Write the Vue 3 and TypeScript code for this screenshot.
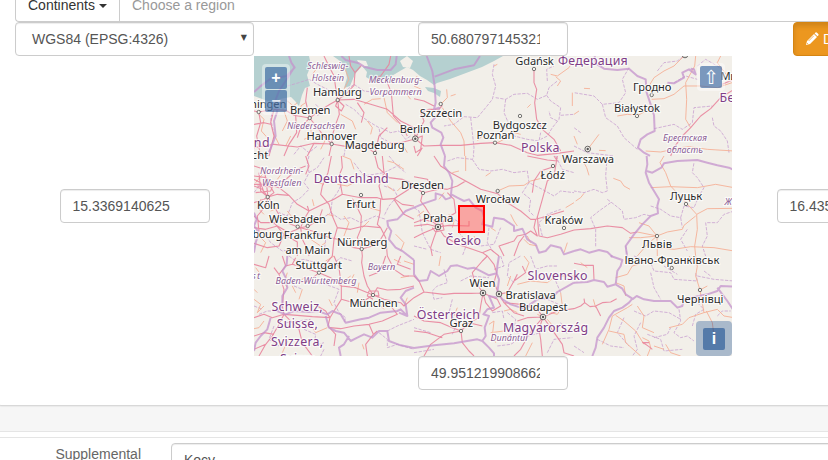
<script setup lang="ts">
import { ref } from 'vue'

type Kind = 'city' | 'country' | 'region'
interface Label { t: string; x: number; w: number; y: number; k: Kind }
interface Tile { x: number; y: number; road: string; trunk: string; admin: string; border: string }

const north = ref('50.680797145321')
const south = ref('49.951219908662')
const west = ref('15.3369140625')
const east = ref('16.435546875')
const title = ref('Kocy')

const L = (k: Kind, t: string, x: number, w: number, y: number): Label => ({ k, t, x, w, y })
const labels: Label[] = [
  L('region', 'Schleswig-', 307.3, 41, 69), L('region', 'Holstein', 311.7, 32.5, 81),
  L('region', 'Mecklenburg-', 368.7, 53.5, 82.7), L('region', 'Vorpommern', 369.5, 52.3, 94.7),
  L('region', 'Niedersachsen', 287, 58, 128.5), L('region', 'Брестская', 663, 44, 140.7),
  L('region', 'область', 666.7, 36.3, 153.3), L('region', 'Nordrhein-', 260, 43.3, 173.8),
  L('region', 'Westfalen', 262, 39.5, 186.3), L('region', 'Bayern', 367.7, 27.6, 269.8),
  L('region', 'Est', 246, 14, 279), L('region', 'Baden-Württemberg', 275.5, 81, 284.3),
  L('region', 'Dunántúl', 490.5, 37, 340.6), L('region', 'Житомир', 724.5, 44, 204.5),
  L('country', 'Nederland', 205, 64.5, 146.8), L('country', 'Федерация', 558, 69.7, 65.3),
  L('country', 'Polska', 521, 38.5, 151.8), L('country', 'Беларусь', 719.5, 58, 102),
  L('country', 'Deutschland', 313.7, 75, 183.3), L('country', 'Česko', 445.5, 35.5, 244.7),
  L('country', 'Slovensko', 527.5, 60, 279.8), L('country', 'Österreich', 416.7, 63.3, 318.7),
  L('country', 'Magyarország', 503, 85, 332.3), L('country', 'Schweiz,', 271.5, 51, 310.8),
  L('country', 'Suisse,', 276.8, 41, 328.3), L('country', 'Svizzera,', 271, 52, 345.8),
  L('country', 'Svizra', 280, 36, 363.3),
  L('city', 'Hamburg', 313, 49, 95.8), L('city', 'Bremen', 290, 40.5, 113.8),
  L('city', 'Groningen', 231, 55.5, 107.8), L('city', 'Hannover', 306.5, 50.5, 139.6),
  L('city', 'Magdeburg', 344.7, 60, 148.8), L('city', 'Utrecht', 228, 40.3, 159),
  L('city', 'Gdańsk', 515.3, 38.5, 64.5), L('city', 'Szczecin', 419.7, 42.5, 116.5),
  L('city', 'Bydgoszcz', 492.7, 54, 128.5), L('city', 'Poznań', 476.5, 37.8, 139),
  L('city', 'Berlin', 399.7, 30, 132.6), L('city', 'Гродно', 633, 38.5, 90.6),
  L('city', 'Białystok', 614, 46, 111.6), L('city', 'Минск', 720.5, 34, 79.6),
  L('city', 'Warszawa', 562, 52, 162.8), L('city', 'Dresden', 401, 43, 188.7),
  L('city', 'Köln', 257, 22.6, 209), L('city', 'Erfurt', 346.3, 29.3, 207.7),
  L('city', 'Wiesbaden', 269, 57, 223), L('city', 'Luxembourg', 220, 62.3, 238.4),
  L('city', 'Frankfurt', 283.7, 48, 238.6), L('city', 'am Main', 285.4, 44.5, 253.7),
  L('city', 'Nürnberg', 337, 50.3, 245.9), L('city', 'Wrocław', 475.7, 44, 202.8),
  L('city', 'Łódź', 540.4, 24.5, 179), L('city', 'Praha', 423, 30.2, 221.5),
  L('city', 'Kraków', 544.4, 38.3, 223.8), L('city', 'Луцьк', 670, 32.3, 200),
  L('city', 'Львів', 642, 30, 248), L('city', 'Івано-Франківськ', 624.4, 95, 264.2),
  L('city', 'Чернівці', 677, 46.5, 302.5), L('city', 'Stuttgart', 295.5, 46.5, 268.8),
  L('city', 'München', 349.4, 48.3, 307), L('city', 'Wien', 469.5, 26, 286.8),
  L('city', 'Bratislava', 505.5, 50.3, 298.8), L('city', 'Budapest', 519, 48.6, 310.8),
  L('city', 'Graz', 449.5, 23.6, 327.4),
]

const towns: [number, number][] = [
  [337.7, 100], [309.7, 118], [331.7, 144], [375, 153], [258.7, 112], [534, 69], [440.7, 104],
  [520, 116], [495, 142.7], [651.7, 95], [637, 116], [423, 193], [267.7, 197], [361, 195],
  [297.7, 226.7], [307.7, 226], [361.7, 249], [497.7, 191], [553, 166], [564, 228], [686, 204],
  [657, 236], [671.7, 268], [700, 290], [319, 272.7], [373, 295], [461, 331],
]
const capitals: [number, number][] = [
  [415.3, 138.7], [587.7, 149], [438, 227], [483, 293], [499, 294], [543, 317], [685, 55],
]

// Line work is stored per tile, three units to a pixel.
const tiles: Tile[] = [
  {
    x: 254, y: 56,
    road: 'M210 0L222 25 240 60 245 95 251 132M251 132L228 145 195 165 167 186M167 186L120 178 95 163 60 160 14 168 0 165M251 132L256 175 245 205 236 235 233 264M251 132L300 130 350 145 400 160 440 195 480 215M251 132L275 115 300 88 303 50 322 28M285 0L290 30 303 50M251 132L270 150 262 165 245 150 251 132M167 186L190 215 210 240 233 264M160 95L155 135 167 186M125 178L128 230 105 265 90 300M0 275L60 265 130 273 180 262 233 264 280 272 330 268 363 291M14 168L20 200 8 240 20 300M60 160L50 200 60 240 45 300M0 205L30 200 50 205M167 186L140 215 130 245M330 268L390 262 440 260 480 250M400 80L412 110 418 180 440 205 460 240M363 291L375 240 400 215M233 264L225 300M160 300L180 262M410 0L405 25 380 60 350 75M310 140L330 170 322 200',
    trunk: 'M15 175L30 190 22 225 40 245M90 165L100 195 85 225M155 140L140 150 150 165M260 175L295 195 305 220M270 100L285 70 270 30M330 145L355 130 380 128M390 125L400 170 430 200M420 100L450 105 470 130M200 230L215 250 200 280M95 270L110 240M305 270L330 290M60 235L75 265M445 265L460 290M340 195L355 215 350 235M190 35L175 55M165 200L175 240 150 250M100 135L118 150 130 140',
    admin: 'M100 90L135 80 165 70 190 85 220 100 245 112 275 105 300 85M275 145L300 160 320 180 350 200 375 215 380 245 400 255M185 145L205 165 190 180M60 145L50 190 62 240 40 300M380 215L410 230 435 225 455 250 470 240M300 85L330 105 370 110M120 295L140 270 165 290 190 270M270 300L275 270',
    border: 'M105 0L112 20 122 35 98 60 50 68 18 92 0 108M262 0L275 12 315 22 330 32 370 42 410 42 425 25 428 0M120 35L95 75 75 105 60 145M60 145L70 165 60 195 65 240 45 290',
  },
  {
    x: 414, y: 56,
    road: 'M360 39L360 80 368 100 362 140 368 190 385 220 420 250 440 285M0 250L4 248 30 270 80 268 140 268 200 262 243 260 290 268 340 290 370 298 430 292 480 285M4 248L15 225 30 195 20 170 45 160 75 160 85 148M4 248L0 215M4 248L25 240 20 280 5 290 0 270M0 128L30 135 60 150M10 300L25 275',
    trunk: 'M85 155L110 195 140 230 150 255 152 300M80 145L100 125 98 100M110 120L125 115M240 265L270 250 280 240M190 255L205 240M340 155L350 145M425 62L440 75 430 90M410 55L430 60 465 35 480 10M475 110L475 150M320 235L300 230M10 60L0 70M0 90L22 100M240 30L250 25',
    admin: 'M240 25L235 55 245 90 235 130 215 155 190 185 150 182 120 205 90 210M245 125L275 130 300 115 340 112 370 130 398 118 405 95 430 75M275 130L270 170 285 205 300 240 340 250 375 255 380 230M398 118L410 135 440 155 435 190 415 215 400 240 380 250M400 75L398 40 420 30M440 178L480 175M170 185L175 230 180 275 178 300M430 195L410 185 405 165',
    border: 'M38 0L55 45 62 90 65 140 60 160 75 155 72 175 50 200 55 215 82 230 88 245 80 265 93 300M62 62L120 40 180 28 198 0',
  },
  {
    x: 574, y: 56,
    road: 'M480 100L440 125 410 158 380 180 350 215 325 240 300 275 290 300M445 85L480 70',
    trunk: 'M365 0L362 30 335 80 338 130 335 190 350 215M233 130L270 128 300 115 330 90 380 90 430 95 480 78M233 110L225 90 240 65 270 45 300 30 330 0M189 178L160 175 130 180M189 180L215 165M30 97L48 98M0 175L15 165M75 235L60 255 45 275M10 265L0 240M215 285L260 288 320 275 345 272 400 280 480 285M440 0L430 20 460 60M75 283L95 284',
    admin: 'M165 35L145 70 155 110 135 140 85 145 95 185 130 210 150 245 190 280M85 145L60 120 0 110M240 218L300 205 325 220 355 200 360 155 415 150M250 45L270 20 310 15 330 0M415 185L420 210 440 225 460 255 465 290M0 270L40 290 120 300M370 30L395 10 430 30 450 45M300 80L335 60 370 70M20 230L0 215',
    border: 'M62 0L65 22 90 38 130 42 165 38 190 60 215 70 218 110 230 145 240 178 242 225 220 235 200 250 192 275 210 290 228 300M280 80L300 82 330 65 325 50 345 40 365 55 360 40 350 38',
  },
  {
    x: 254, y: 156,
    road: 'M0 60L35 65 42 123 25 100 0 90M42 123L70 115 105 118 130 145 165 165M42 123L60 150 80 185 110 205 140 215M35 65L60 80 90 75 130 40 155 30M0 85L40 85 75 95 105 118M0 140L30 130 42 123M155 0L165 30 155 55M165 165L200 148 240 130 265 115 320 125 370 125 385 130 420 128 480 90M232 0L222 50 205 90 200 115 225 145 235 180 250 215M140 215L165 210 195 190 205 160M140 215L150 190 165 165 160 150M140 215L145 250 160 280 165 300M140 215L185 228 210 240 250 250 300 275 323 279M323 279L310 245 320 220 322 180 305 145 295 128M250 215L290 220 330 210 380 215 395 245 400 300M323 279L355 270 380 250 400 215M380 130L378 170 370 205 380 215M262 0L265 35 255 60 265 115M363 0L372 35 405 65 445 70 480 85M385 130L375 90 390 50 385 0M250 215L240 250 235 300M140 215L105 230 70 210 35 220 0 215M0 180L20 200 60 200 90 235 75 270 40 275 0 262M90 235L130 258 130 300M42 123L35 150 10 180 15 225M323 279L325 300M420 130L450 175 480 190M0 30L30 40 35 65M420 128L445 145 480 150M15 50L20 105 42 123M5 110L50 105 60 80M0 70L20 80 30 110M10 90L50 92 60 110 42 123',
    trunk: 'M75 30L85 50 70 70M5 80L25 55M50 165L75 155M265 0L290 10 300 40M250 85L280 90 310 75M400 15L420 20 450 40M170 250L200 270 215 260M15 240L35 260 20 290M270 180L285 200 270 240M345 155L380 165M430 105L450 85M190 80L210 85M325 215L345 195M180 150L175 130M240 180L220 175M425 235L450 260 440 285M100 165L115 185M335 255L370 265M20 130L10 155 30 175M400 90L420 105',
    admin: 'M165 0L160 20 165 50 150 80 165 100 140 125 115 140 100 180 75 170 60 205M165 50L190 35 210 5M240 60L265 80 250 110 235 130 230 170 200 190 175 180M230 170L260 190 290 185 320 200 365 180 395 190M390 90L420 100 430 120 405 150 390 180M300 20L330 60 390 50 440 25M30 230L50 260 85 285 120 280M180 230L215 250 210 290M405 0L430 30 455 50M15 90L0 110',
    border: 'M480 155L455 165 430 190 400 195 402 210 412 225 405 250 425 275 445 285 480 312M0 170L8 190 0 210 15 230 5 260 0 290',
  },
  {
    x: 414, y: 156,
    road: 'M60 0L80 30 110 50 155 75 200 100 251 113 280 140 320 165 350 190 365 190 400 180 450 165M0 62L40 70 60 95 100 100 130 90 155 75M0 90L27 111 50 105 75 100M72 213L50 180 35 155 20 135 25 115M72 213L105 208 165 210 165 195M72 213L40 205 0 210M72 213L90 240 130 265 175 280 205 290 220 300M72 213L60 245 50 275 55 300M72 213L100 185 125 170 120 130 100 110M72 213L30 230 0 245M365 190L360 215 370 240 350 225 335 235 310 240 300 255 255 270 270 300M370 180L375 240 400 245 440 235 480 222M340 0L400 12 430 15 420 0M430 0L425 30 380 45 360 75 355 110M425 30L420 60 400 75 385 130 368 190M205 290L230 280 255 300M330 240L315 260 300 300M72 213L60 200 85 198 90 222 65 228 55 215M0 200L30 190 60 200',
    trunk: 'M155 0L155 45M135 45L115 50M251 105L285 90 330 88 350 75 390 65M105 175L120 195 115 215M230 50L215 60M290 175L300 195 310 210M330 250L345 265 370 270M460 260L450 290M480 140L455 155M90 110L75 130M340 240L350 260M10 180L30 165M180 240L190 265M230 215L245 225',
    admin: 'M100 15L130 5 175 10 180 0M175 10L195 40 230 45 265 40 300 50 340 45 345 80 385 100 420 120 440 105 480 110M345 80L325 110 350 130 345 165 360 180M300 145L320 120M0 155L15 165 25 230 50 280 80 290M110 185L130 195 135 230 160 260 145 300M160 260L200 270 240 265 260 215M425 0L445 40 480 50M385 240L375 200 400 175 440 160M0 270L40 280M225 215L220 260 240 290',
    border: 'M93 0L90 30 105 50 115 75 110 125 95 130 85 118 65 112 65 130 30 142 0 155M112 115L130 125 150 135 165 130 185 155 205 165 210 185 205 205 235 212 240 185 270 190 300 210 300 225 325 218 340 250 365 265 375 290 395 285 410 268 440 275 450 295 480 285',
  },
  {
    x: 574, y: 156,
    road: 'M0 222L50 218 100 210 145 215 170 232 190 228',
    trunk: 'M30 20L38 35 45 58M118 67L140 75 150 90 168 100M5 135L20 125 30 112M270 0L258 20 275 50 290 90 336 140 368 175 400 158 480 157M230 95L290 92 370 95 425 85 480 95M249 240L280 228 325 220 330 208 365 180M249 240L200 245 165 245M249 240L225 210 195 200M249 240L250 300M249 240L220 265 190 300M368 175L370 220 362 270 365 300M249 275L300 280 350 272 420 275 480 285M190 228L249 240',
    admin: 'M98 20L95 60 100 105 85 110 60 100 30 110 0 105M100 130L120 145 145 165 150 190 185 185 210 175 230 180M110 140L75 165 50 185 65 220 65 275M230 150L260 160 290 180 320 185 330 150 360 155 375 120 390 95 370 65 355 50 360 20M320 185L325 215M480 165L450 175 430 200 395 200 400 240 385 270 395 300M340 220L320 250 340 285M155 270L160 300',
    border: 'M218 0L220 25 215 50 225 80 240 105 255 130 250 150 252 172 230 180 205 205 180 235 155 270 160 308M218 45L235 50 262 35 270 22 310 15 370 12 400 20 430 28 465 35 480 42M0 285L20 280 45 290 75 282 100 288 115 302',
  },
  {
    x: 254, y: 256,
    road: 'M85 0L95 30 75 55 90 100 85 150 90 175M195 50L150 35 115 25 95 30M195 50L230 65 262 90 262 130 240 165 228 185M195 50L165 75 135 80M262 90L305 95 357 117M357 117L390 130 440 140 450 150 480 125M357 117L340 90 330 60 323 20 325 0M357 117L370 95 400 102 440 100 480 90M357 117L330 135 300 140 262 130M195 50L215 25 235 0M228 215L260 218 300 210 345 205 385 195 430 175 410 150M345 205L358 235 335 265 340 300M358 235L370 225M0 185L30 175 55 185 90 175 130 178 175 182 228 185 222 210 245 235 240 270M90 175L75 205 55 240 35 265 0 280M0 25L35 35 45 0M90 175L115 200 135 220 145 260 175 300M395 0L385 30 370 50 345 60M400 0L420 40 450 60 480 60M240 0L255 35 262 90M357 117L375 120 372 105 345 105 340 120 357 130M115 25L125 5M75 55L60 35M0 240L30 230 60 235M228 185L215 165 190 150M35 265L15 300M440 0L430 25 470 40',
    trunk: 'M5 35L20 55M0 130L20 145 10 170M10 170L30 150M100 50L90 80 100 95M145 100L135 130M225 130L235 150M375 145L390 160M315 80L310 110M460 125L450 150M0 100L10 110M30 195L15 215 0 218M155 60L140 75M270 75L290 60M300 55L285 85M330 280L325 265M125 110L115 90M440 65L465 60M440 20L420 10M450 15L480 25M165 200L185 230 220 215M215 15L240 0M105 245L85 290',
    admin: 'M105 0L125 15 150 10 185 20M120 90L145 100M180 80L215 85 255 100 240 140 255 170M235 25L260 5 295 15M15 175L40 165 70 165M95 200L130 195 170 190M375 230L400 250 400 275 430 265 480 280M400 225L430 210 480 190M60 210L45 250 75 270 100 260M150 220L185 235 180 270 210 260M255 170L275 185 270 200M0 150L25 160M210 280L200 300',
    border: 'M100 0L98 25 85 45 95 65 100 95 85 120 85 150 70 165 95 175 120 165 165 168 190 165 220 175 235 165 260 175 275 200 320 190 345 185 380 170 430 165 440 160 460 180M480 95L455 105 440 125 455 145 460 180 435 170M50 185L40 220 20 240 5 260 0 285M215 180L225 215 245 225 270 230 290 255 310 245 330 235 355 245 375 225 400 225 405 255 440 268 480 276M260 300L255 275 270 265 285 240',
  },
  {
    x: 414, y: 256,
    road: 'M207 111L170 112 120 112 90 115 30 108 0 125M207 111L215 140 235 165 260 150 250 130 207 111M220 0L240 25 248 50 240 80 255 114 270 140 320 145 370 160 387 183M207 111L200 150 195 185 165 200 141 225M141 225L115 215 80 200 30 195 0 180M141 225L145 260 165 285 180 300M141 225L90 235 50 265 30 300M207 111L180 70 175 50 205 15 220 0M387 183L375 220 380 250 385 300M387 183L410 215 445 265 450 290 480 300M387 183L340 185 310 195M387 183L430 165 480 158M255 114L280 110 300 75 335 50 325 30M300 75L310 55M0 225L40 230 85 245M387 183L345 235 320 280 300 300M270 140L300 170 330 180M30 108L15 75 0 60M165 200L205 210',
    trunk: 'M310 85L350 75 400 80 425 60 480 60M335 45L345 20 330 0M270 165L290 160 310 170M225 205L240 195 235 240 245 260M387 183L370 175M400 190L425 220M75 30L80 0M290 60L280 90M355 260L335 300M445 150L440 110M290 235L270 245M410 170L430 175 440 160M130 155L120 180M230 230L270 225',
    admin: 'M90 40L100 80 70 90 55 105 60 130 85 125M115 130L105 170 130 200 115 235M260 0L270 30 240 40M300 80L280 60 285 20 320 0M350 0L365 40 400 30 430 30M280 170L305 190 300 220 325 245 380 230M445 150L400 130M0 215L50 230M250 270L290 265 330 240M400 290L420 250 475 245M425 75L440 110M140 75L170 60 225 65M235 170L265 165 270 190M440 200L460 235M0 290L60 280',
    border: 'M0 12L0 55 15 75 40 72 50 45 75 60 100 45 110 30 130 28 160 38 180 35 225 58 248 52 255 70 250 110 265 130 290 145 330 158 370 130 415 125 430 108 480 80M250 125L225 120 240 155 220 160 208 175 225 180 212 215 215 240 205 255 190 250 120 262 60 268 0 276M205 255L225 275 240 292 240 300M255 0L250 30 248 52',
  },
  {
    x: 574, y: 256,
    road: 'M0 158L20 150 32 140 30 128M32 140L48 152 65 150 80 180M65 150L85 140 110 138 128 128M205 258L225 272 235 280M0 22L30 28 58 28 60 70M205 260L225 260',
    trunk: 'M125 80L150 90 155 120M125 65L160 55 175 30 210 20M175 145L160 155 115 180 105 220 85 265M125 178L150 195 185 225 210 265M105 225L150 235 155 260 200 300M190 150L210 180 205 215 240 230M285 215L325 205 345 185 390 170 378 102M378 102L365 60 370 30 365 0M378 102L400 90M397 165L415 200 420 240M345 0L370 30M390 170L430 160 450 180 480 185M40 35L20 20M0 60L15 70M220 300L230 275 225 255 205 245M275 265L290 290 320 300M65 155L58 130M240 270L270 280',
    admin: 'M180 0L230 20 240 45 290 50 300 70 370 75 365 50M230 50L240 95 260 130M315 160L320 195 300 230 320 245 340 240 360 255M180 165L215 180 240 165 285 170 320 190M150 185L130 230 165 270M370 60L420 70 480 75M360 130L390 160 365 175 355 210M270 30L310 55M70 250L110 270 150 275M220 235L260 250 270 285 325 280M0 270L30 290M390 45L410 60M430 180L445 165 470 165M200 200L180 240 190 280 175 300M240 245L280 235 290 215',
    border: 'M110 0L145 12 140 30 130 45 125 85 100 92 90 78 60 72 40 78 0 80M125 85L145 98 155 115 175 128 165 140 145 155 120 165 105 185 90 215 70 245 65 275 55 300M175 130L188 120 210 130 240 135 290 135 310 155 325 150 330 130 400 115 430 105 440 90 480 92M430 95L445 115 460 135 480 165',
  },
]
</script>

<template>
  <main class="page">
    <section class="panel">
      <div class="search">
        <button class="continents">Continents <span class="caret"></span></button>
        <span class="placeholder">Choose a region</span>
      </div>
      <div class="extent">
        <div class="select"><span>WGS84 (EPSG:4326)</span><span class="arrow">▼</span></div>
        <input v-model="north" class="field number" aria-label="North">
        <button class="draw">
          <svg width="14" height="14" viewBox="0 0 14 14"><path d="M1 13L2 9 9 2 12 5 5 12zM9.6 1.4L10.5.6Q11.2 0 12 .7L13.3 2Q14 2.8 13.3 3.5L12.5 4.3z" /><path class="nick" d="M3.6 9L8.8 3.8M2 11l1 1" /></svg>
          Draw
        </button>
        <input v-model="west" class="field" aria-label="West">
        <div class="map">
          <svg class="canvas" width="478" height="300" viewBox="254 56 478 300">
            <rect class="land" x="254" y="56" width="478" height="300" />
            <path class="sea" d="M254 56H309L311 65 307 75 310 86 305 88 302 95 299 106 295 101 291 97 280 99 274 104 265 100 254 96ZM333 56L340 61 345 68 347 78 344 88 350 86 355 74 362 66 367 72 366 77 376 83 382 79 390 77 400 71 407 67 413 70 420 76 427 80 434 85 437 83 450 79 466 73 482 67 494 61 503 56ZM425 87L434 88 441 91 440 97 434 93 428 91Z" />
            <g class="island"><path d="M400 61L407 56 413 61 410 68 403 67Z" /><path d="M357 60l9 1 2 5-7 1z" /></g>
            <g v-for="tile in tiles" :key="`${tile.x}-${tile.y}`" :transform="`translate(${tile.x} ${tile.y}) scale(.33333)`">
              <path class="admin" :d="tile.admin" />
              <path class="trunk" :d="tile.trunk" />
              <path class="road" :d="tile.road" />
              <path class="border" :d="tile.border" />
            </g>
            <g class="town"><circle v-for="(c, i) in towns" :key="i" :cx="c[0]" :cy="c[1]" r="1.7" /></g>
            <g class="capital">
              <template v-for="(c, i) in capitals" :key="i">
                <circle :cx="c[0]" :cy="c[1]" r="2.8" /><circle class="core" :cx="c[0]" :cy="c[1]" r="1.2" />
              </template>
            </g>
            <text v-for="l in labels" :key="l.t" :class="l.k" :x="l.x" :y="l.y" :textLength="l.w">{{ l.t }}</text>
            <rect class="selection" x="459" y="206" width="25" height="26" />
          </svg>
          <div class="control zoom"><button>+</button><button class="minus">−</button></div>
          <div class="control rotate"><button>⇧</button></div>
          <div class="control info"><button>i</button></div>
        </div>
        <input v-model="east" class="field" aria-label="East">
        <input v-model="south" class="field number south" aria-label="South">
      </div>
    </section>
    <section class="form">
      <label>Supplemental</label>
      <input v-model="title" class="field wide" aria-label="Supplemental">
    </section>
  </main>
</template>

<style>
body { overflow: hidden; background: #f6f6f6; }
</style>

<style scoped>
.page { height: 460px; overflow: hidden; font: 14px/20px "Liberation Sans", Arial, sans-serif; color: #555; }
.page * { box-sizing: border-box; }
button { font: inherit; margin: 0; padding: 0; border: 0; }
.panel { height: 406px; margin-left: -2px; padding-left: 17px; background: #fff; border-bottom: 1px solid #d8d8d8; border-radius: 0 0 0 4px; box-shadow: 0 1px 1px rgba(0,0,0,.05); }
.search { display: flex; align-items: flex-end; height: 22px; border: 1px solid #ccc; border-width: 0 0 1px 1px; border-radius: 0 0 0 4px; }
.continents { display: flex; align-items: center; width: 104px; height: 21px; padding: 0 0 11px 12px; border-right: 1px solid #ccc; background: transparent; color: #333; gap: 7px; white-space: nowrap; }
.caret { margin-left: -3px; margin-top: 1px; border: 4px solid transparent; border-top-color: #333; border-bottom: 0; }
.placeholder { padding: 0 12px 6px; color: #999; }
.extent { display: grid; grid-template-columns: 239px 478px 239px; grid-template-rows: 34px 300px 34px; align-items: center; justify-items: center; }
.field { width: 150px; height: 34px; margin: 0; padding: 6px 12px; border: 1px solid #ccc; border-radius: 4px; outline: 0; background: #fff; color: #555; font: inherit; box-shadow: inset 0 1px 1px rgba(0,0,0,.075); }
.number { padding-right: 27px; }
.south { grid-column: 2; }
.select { display: flex; justify-content: space-between; align-items: center; width: 239px; height: 34px; padding: 0 6px 0 16px; border: 1px solid #ccc; border-radius: 4px; box-shadow: inset 0 1px 1px rgba(0,0,0,.075); }
.arrow { padding-bottom: 2px; font: 8px/18px "DejaVu Sans", sans-serif; color: #444; }
.draw { display: flex; align-items: center; justify-self: start; gap: 4px; width: 75px; height: 34px; margin-left: 61px; padding-left: 11px; border: 1px solid #d58512; border-radius: 4px; background: #ec971f; color: #fff; box-shadow: inset 0 3px 5px rgba(0,0,0,.125); }
.draw svg { fill: #fff; }
.nick { fill: none; stroke: #ec971f; stroke-width: .7; }
.map { position: relative; width: 478px; height: 300px; }
.canvas { display: block; }
.land, .island { fill: #f2efe9; }
.sea { fill: #b5d0d0; }
.road, .trunk, .admin, .border { fill: none; stroke-linejoin: round; }
.road { stroke: #e8829b; stroke-width: 3.3; opacity: .88; }
.trunk { stroke: #f5b096; stroke-width: 3; opacity: .9; }
.admin { stroke: #c9a1d0; stroke-width: 3; stroke-dasharray: 10 4; opacity: .8; }
.border { stroke: #c493cc; stroke-width: 6; opacity: .75; }
.town circle { fill: #f6f3ed; stroke: #555; stroke-width: .8; }
.capital circle { fill: #f6f3ed; stroke: #444; stroke-width: .8; }
.capital .core { fill: #555; stroke: none; }
text { font-family: "Noto Sans", sans-serif; paint-order: stroke; stroke: rgba(255,255,255,.7); stroke-width: 2.4px; stroke-linejoin: round; }
.city { font-size: 11.2px; fill: #2b2b2b; }
.country { font-size: 12.4px; fill: #803d87; }
.region { font-size: 9.2px; font-style: italic; fill: #8a5c94; }
.selection { fill: rgba(255,92,92,.5); stroke: #f00; stroke-width: 2; }
.control { position: absolute; padding: 3px; border-radius: 4px; background: rgba(255,255,255,.4); }
.control button { display: block; width: 22px; height: 22px; border-radius: 2px; background: rgba(0,60,136,.5); color: #fff; font: bold 16px/22px "Liberation Sans", Arial, sans-serif; text-align: center; }
.zoom { top: 8px; left: 8px; }
.zoom button + button { margin-top: 1px; }
.zoom .minus { color: rgba(255,255,255,.8); }
.rotate { top: 7px; right: 7px; }
.rotate button { font: 19px/20px "DejaVu Sans", sans-serif; }
.info { right: 0; bottom: 0; width: 36px; height: 35px; padding: 7px; border-radius: 4px; background: rgba(0,60,136,.3); }
.form { display: flex; align-items: flex-start; height: 60px; margin-top: 25px; padding-top: 5px; border-top: 1px solid #e5e5e5; background: linear-gradient(#e5e5e5, #e5e5e5) 0 5px / 100% 1px no-repeat #fff; }
.form label { flex: none; width: 141px; margin-top: 7px; text-align: right; color: #666; }
.wide { flex: none; width: 800px; margin: 6px 0 0 30px; }
</style>
